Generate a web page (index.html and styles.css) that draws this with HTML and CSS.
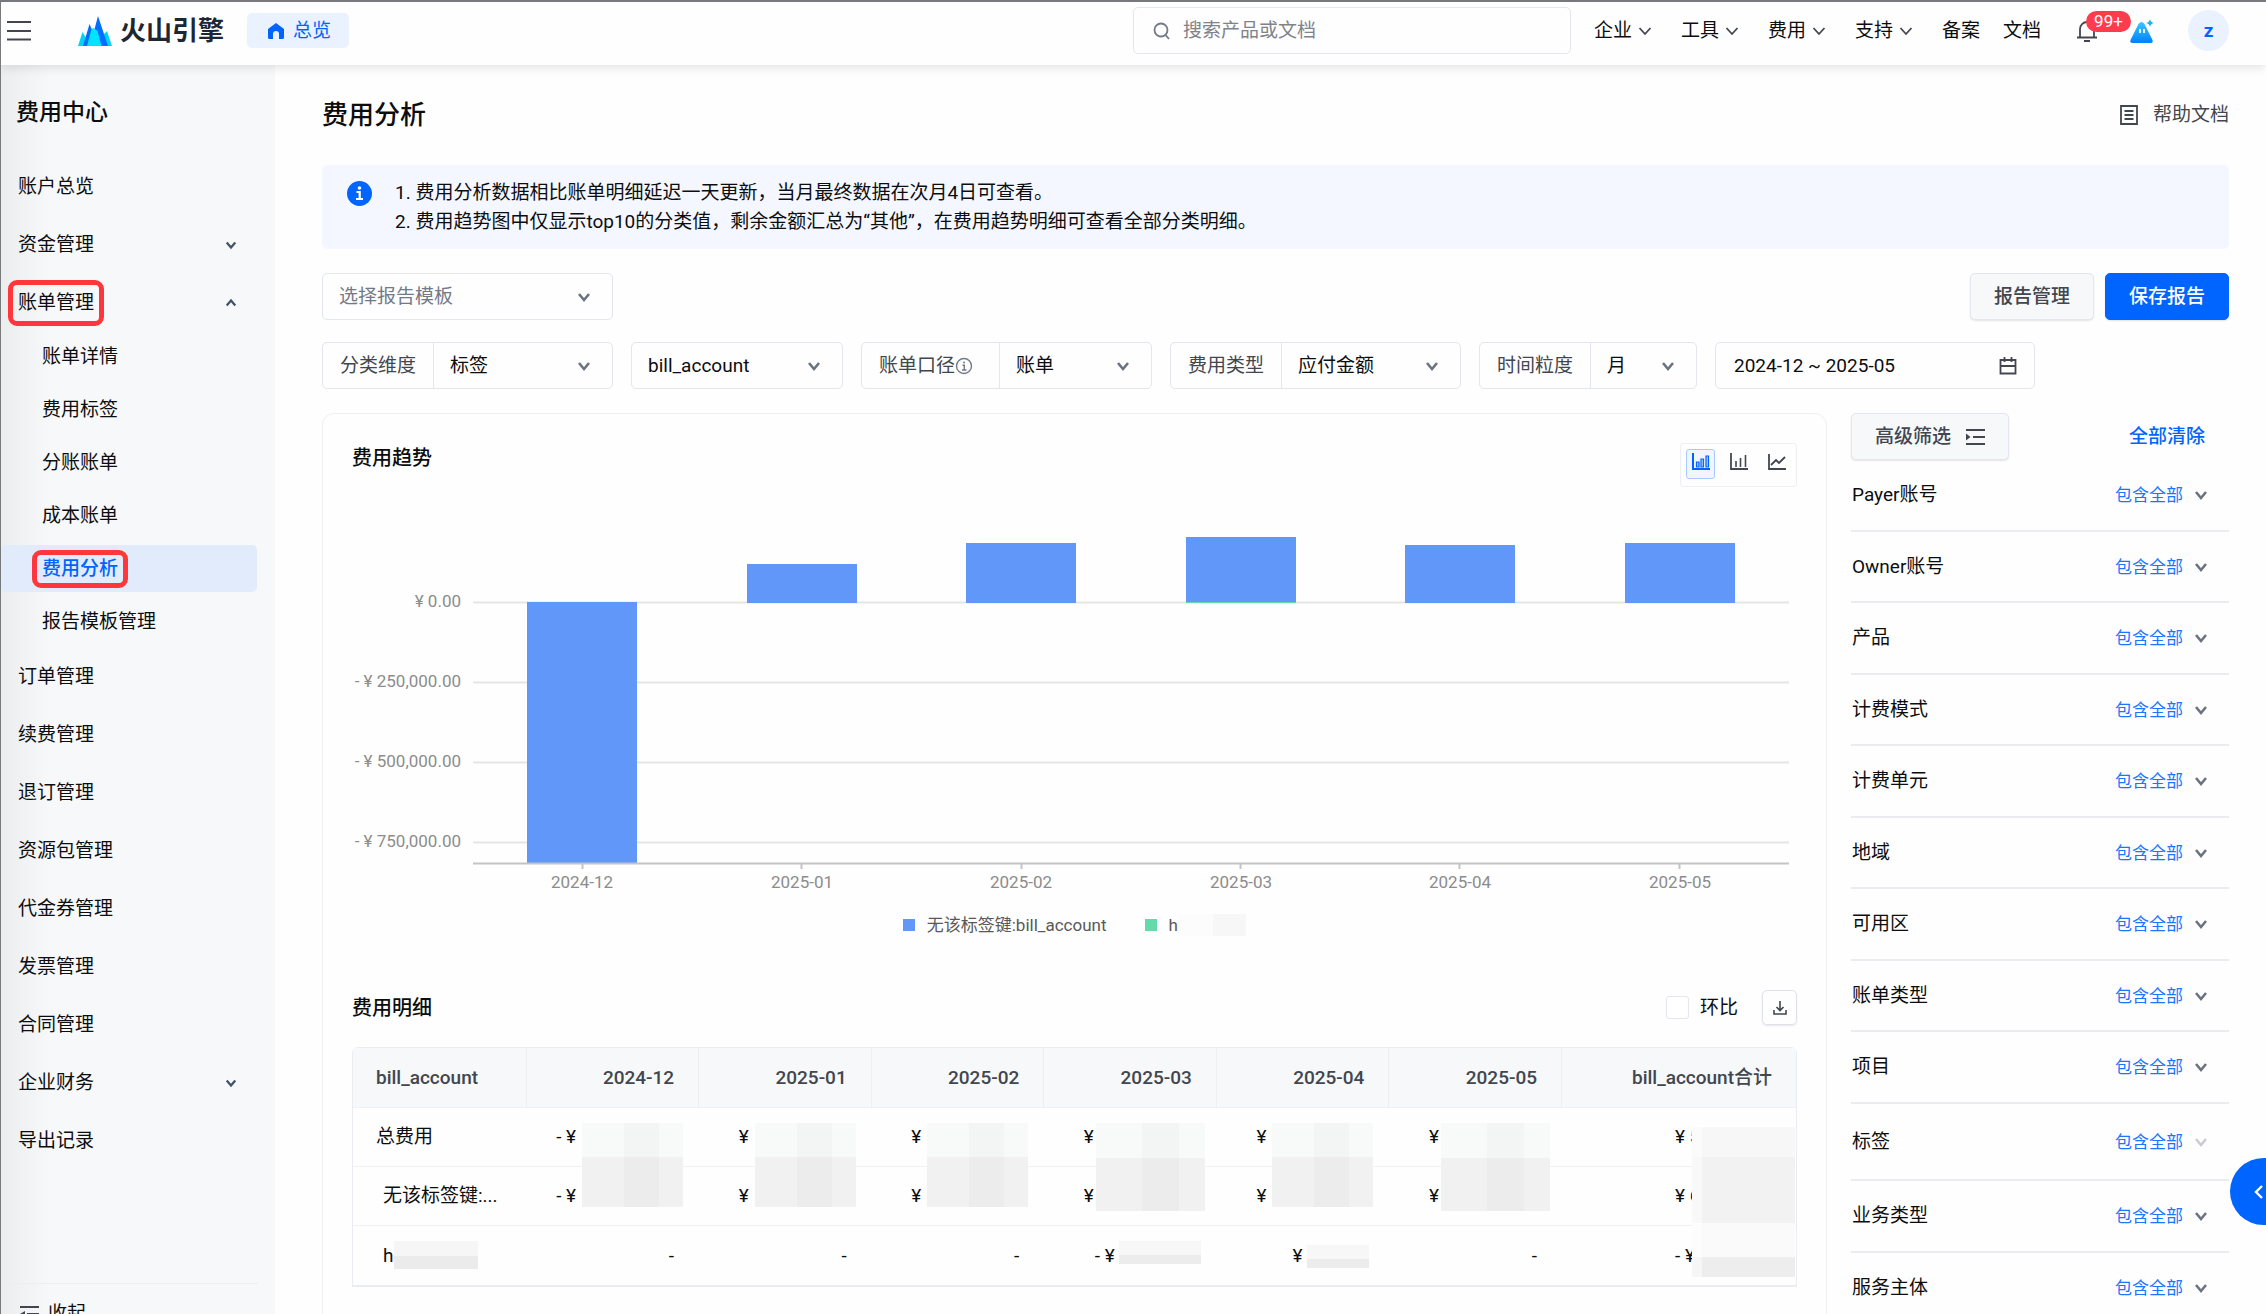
FILE: index.html
```html
<!DOCTYPE html>
<html lang="zh-CN">
<head>
    <meta charset="UTF-8">
    <meta name="viewport" content="width=device-width, initial-scale=1.0">
    <title>费用分析</title>
    <link rel="stylesheet" href="styles.css">
</head>
<body>
    <!-- shared icons -->
    <svg class="sprite" aria-hidden="true">
        <symbol id="down" viewBox="0 0 14 14"><path d="M2 4l5 6 5-6" fill="none" stroke="currentColor" stroke-width="2.6"/></symbol>
        <symbol id="down-thin" viewBox="0 0 14 14"><path d="M1.5 4l5.5 6 5.5-6" fill="none" stroke="currentColor" stroke-width="1.8"/></symbol>
        <symbol id="up" viewBox="0 0 14 14"><path d="M2 10l5-6 5 6" fill="none" stroke="currentColor" stroke-width="2.6"/></symbol>
    </svg>

    <header class="header">
        <button class="menu-button" aria-label="菜单">
            <svg width="24" height="20" viewBox="0 0 24 20"><path d="M0 1h24M0 10h24M0 18.500h24" stroke="#42464e" stroke-width="2"/></svg>
        </button>
        <a class="logo" href="#">
            <svg width="34" height="30" viewBox="0 0 34 30">
                <path d="M0 30L4.500 16 8 22l2-2v10zM24 30V20l5-5 5 15z" fill="#00d4f5"/>
                <path d="M5 30L11.500 8l4 9L20 0l10 30z" fill="#006eff"/>
                <path d="M9 30l4.500-17 2-1 4 3 4 15z" fill="#00e5ff"/>
            </svg>
            <span>火山引擎</span>
        </a>
        <a class="overview" href="#">
            <svg width="16" height="16" viewBox="0 0 16 16"><path d="M8 0L0 6v8.500Q0 16 1.500 16H5v-5a3 3 0 0 1 6 0v5h3.500q1.500 0 1.500-1.500V6z" fill="#0064ff"/></svg>
            <span>总览</span>
        </a>
        <label class="search">
            <svg width="18" height="18" viewBox="0 0 18 18"><circle cx="8" cy="8" r="6.500" fill="none" stroke="#737a87" stroke-width="1.800"/><path d="M12.500 13l3.500 4" stroke="#737a87" stroke-width="1.800"/></svg>
            <input type="text" placeholder="搜索产品或文档" aria-label="搜索产品或文档">
        </label>
        <nav class="top-nav">
            <a href="#">企业<svg class="chevron"><use href="#down-thin"/></svg></a>
            <a href="#">工具<svg class="chevron"><use href="#down-thin"/></svg></a>
            <a href="#">费用<svg class="chevron"><use href="#down-thin"/></svg></a>
            <a href="#">支持<svg class="chevron"><use href="#down-thin"/></svg></a>
            <div class="top-links">
                <a href="#">备案</a>
                <a href="#">文档</a>
            </div>
        </nav>
        <button class="bell" aria-label="消息">
            <svg width="20" height="22" viewBox="0 0 20 22"><path d="M0 17.500h20M3 17V9a7 7 0 0 1 14 0v8M7 21h6" fill="none" stroke="#42464e" stroke-width="1.800"/></svg>
            <span class="badge">99+</span>
        </button>
        <button class="assistant" aria-label="助手">
            <svg width="26" height="26" viewBox="0 0 26 26">
                <defs><linearGradient id="hill" x1="0" y1="0" x2="0" y2="1"><stop offset="0" stop-color="#3cc6ff"/><stop offset="1" stop-color="#0080ff"/></linearGradient></defs>
                <path d="M9.500 6q3-4 6 0l8 16q1 3-2 3h-18q-3 0-2-3z" fill="url(#hill)"/>
                <path d="M11 11v4M15 11v4" stroke="#fff" stroke-width="1.800"/>
                <path d="M21 1q.5 3.500 4 4-3.500.5-4 4-.5-3.500-4-4 3.500-.5 4-4z" fill="#12b8e8"/>
            </svg>
        </button>
        <button class="avatar">z</button>
    </header>

    <div class="layout">
        <aside class="sidebar">
            <h2>费用中心</h2>
            <nav class="menu">
                <a href="#">账户总览</a>
                <a href="#">资金管理<svg class="chevron"><use href="#down"/></svg></a>
                <a href="#"><span class="marked">账单管理</span><svg class="chevron"><use href="#up"/></svg></a>
                <div class="submenu">
                    <a href="#">账单详情</a>
                    <a href="#">费用标签</a>
                    <a href="#">分账账单</a>
                    <a href="#">成本账单</a>
                    <a class="active" href="#"><span class="marked">费用分析</span></a>
                    <a href="#">报告模板管理</a>
                </div>
                <a href="#">订单管理</a>
                <a href="#">续费管理</a>
                <a href="#">退订管理</a>
                <a href="#">资源包管理</a>
                <a href="#">代金券管理</a>
                <a href="#">发票管理</a>
                <a href="#">合同管理</a>
                <a href="#">企业财务<svg class="chevron"><use href="#down"/></svg></a>
                <a href="#">导出记录</a>
            </nav>
            <button class="collapse">
                <svg width="19" height="16" viewBox="0 0 19 16"><path d="M0 1h19M7 8h12M0 15h19" stroke="#42464e" stroke-width="2"/><path d="M5 5v6L0 8z" fill="#42464e"/></svg>
                收起
            </button>
        </aside>

        <main class="main">
            <div class="page-head">
                <h1>费用分析</h1>
                <a class="help" href="#">
                    <svg width="18" height="20" viewBox="0 0 18 20"><path d="M1 1h16v18H1zM4.500 6h9M4.500 10h9M4.500 14h9" fill="none" stroke="#42464e" stroke-width="1.800"/></svg>
                    帮助文档
                </a>
            </div>

            <div class="notice">
                <svg width="25" height="25" viewBox="0 0 25 25"><circle cx="12.500" cy="12.500" r="12.500" fill="#0064ff"/><circle cx="12.500" cy="7" r="1.800" fill="#fff"/><path d="M9.500 11h3.200v7M9 18h7" fill="none" stroke="#fff" stroke-width="2.200"/></svg>
                <ol>
                    <li>费用分析数据相比账单明细延迟一天更新，当月最终数据在次月4日可查看。</li>
                    <li>费用趋势图中仅显示top10的分类值，剩余金额汇总为“其他”，在费用趋势明细可查看全部分类明细。</li>
                </ol>
            </div>

            <div class="template-row">
                <div class="field w-large">
                    <div class="select placeholder">
                        <select aria-label="选择报告模板"><option>选择报告模板</option></select>
                        <svg class="chevron"><use href="#down"/></svg>
                    </div>
                </div>
                <div class="actions">
                    <button class="btn">报告管理</button>
                    <button class="btn primary">保存报告</button>
                </div>
            </div>

            <div class="filters">
                <div class="field w-large">
                    <label for="dimension">分类维度</label>
                    <div class="select">
                        <select id="dimension"><option>标签</option></select>
                        <svg class="chevron"><use href="#down"/></svg>
                    </div>
                </div>
                <div class="field w-small">
                    <div class="select">
                        <select aria-label="标签键"><option>bill_account</option></select>
                        <svg class="chevron"><use href="#down"/></svg>
                    </div>
                </div>
                <div class="field w-large">
                    <label for="scope" class="with-tip">账单口径<svg width="18" height="18" viewBox="0 0 18 18"><circle cx="9" cy="9" r="7.500" fill="none" stroke="#737a87" stroke-width="1.400"/><circle cx="9" cy="5.500" r="1" fill="#737a87"/><path d="M7.500 8.200H9.300V13M7 13h4.500" fill="none" stroke="#737a87" stroke-width="1.400"/></svg></label>
                    <div class="select">
                        <select id="scope"><option>账单</option></select>
                        <svg class="chevron"><use href="#down"/></svg>
                    </div>
                </div>
                <div class="field w-large">
                    <label for="cost-type">费用类型</label>
                    <div class="select">
                        <select id="cost-type"><option>应付金额</option></select>
                        <svg class="chevron"><use href="#down"/></svg>
                    </div>
                </div>
                <div class="field w-period">
                    <label for="period">时间粒度</label>
                    <div class="select">
                        <select id="period"><option>月</option></select>
                        <svg class="chevron"><use href="#down"/></svg>
                    </div>
                </div>
                <div class="field w-date">
                    <input type="text" value="2024-12 ~ 2025-05" aria-label="时间范围">
                    <svg width="18" height="18" viewBox="0 0 18 18"><path d="M1.500 3h15v13.500h-15zM1.500 9h15M5.500 0v5M12.500 0v5" fill="none" stroke="#42464e" stroke-width="1.800"/></svg>
                </div>
            </div>

            <div class="columns">
                <section class="card">
                    <div class="card-head">
                        <h3>费用趋势</h3>
                        <div class="chart-types">
                            <button class="on" aria-label="堆叠柱状图"><svg width="18" height="18" viewBox="0 0 18 18"><path d="M1 0v16h17" fill="none" stroke="currentColor" stroke-width="2"/><path d="M4.500 9h2.500v5H4.500zM9 6h2.500v8H9zM14 3h2.500v11H14z" fill="#a8c8ff" stroke="currentColor" stroke-width="1.200"/></svg></button>
                            <button aria-label="柱状图"><svg width="18" height="18" viewBox="0 0 18 18"><path d="M1 0v16h17" fill="none" stroke="currentColor" stroke-width="1.800"/><path d="M6 8v6M10.500 5v9M15.500 2v12" stroke="currentColor" stroke-width="1.600"/></svg></button>
                            <button aria-label="折线图"><svg width="18" height="18" viewBox="0 0 18 18"><path d="M1 1v15h17" fill="none" stroke="currentColor" stroke-width="1.800"/><path d="M3 12l5-5 3 3 6-6" fill="none" stroke="currentColor" stroke-width="1.800"/></svg></button>
                        </div>
                    </div>

                    <svg class="chart" viewBox="0 0 1445 405">
                        <path class="grid-line" d="M121 101.500h1316M121 181.500h1316M121 261.500h1316M121 341.500h1316"/>
                        <g class="bars">
                            <rect x="175" y="101" width="110" height="261"/>
                            <rect x="395" y="63" width="110" height="39"/>
                            <rect x="614" y="42" width="110" height="60"/>
                            <rect x="834" y="36" width="110" height="65"/>
                            <rect x="1053" y="44" width="110" height="58"/>
                            <rect x="1273" y="42" width="110" height="60"/>
                        </g>
                        <rect class="bar-green" x="834" y="101" width="110" height="1"/>
                        <path class="axis" d="M121 362.500h1316M230.500 362v6M449.500 362v6M669.500 362v6M888.500 362v6M1107.500 362v6M1327.500 362v6"/>
                        <g class="y-labels">
                            <text x="109" y="106">¥ 0.00</text>
                            <text x="109" y="186">- ¥ 250,000.00</text>
                            <text x="109" y="266">- ¥ 500,000.00</text>
                            <text x="109" y="346">- ¥ 750,000.00</text>
                        </g>
                        <g class="x-labels">
                            <text x="230" y="387">2024-12</text>
                            <text x="450" y="387">2025-01</text>
                            <text x="669" y="387">2025-02</text>
                            <text x="889" y="387">2025-03</text>
                            <text x="1108" y="387">2025-04</text>
                            <text x="1328" y="387">2025-05</text>
                        </g>
                    </svg>
                    <div class="legend">
                        <span><i class="dot"></i>无该标签键:bill_account</span>
                        <span><i class="dot green"></i>hu<i class="mask legend-mask"></i></span>
                    </div>

                    <div class="table-head">
                        <h3>费用明细</h3>
                        <label class="check"><input type="checkbox">环比</label>
                        <button class="download" aria-label="下载">
                            <svg width="14" height="14" viewBox="0 0 14 14"><path d="M7 0v9M3.500 6L7 9.500 10.500 6M1 9v4h12V9" fill="none" stroke="#42464e" stroke-width="1.600"/></svg>
                        </button>
                    </div>
                    <div class="table-wrap">
                        <table>
                            <thead>
                                <tr>
                                    <th>bill_account</th>
                                    <th>2024-12</th>
                                    <th>2025-01</th>
                                    <th>2025-02</th>
                                    <th>2025-03</th>
                                    <th>2025-04</th>
                                    <th>2025-05</th>
                                    <th class="total">bill_account合计</th>
                                </tr>
                            </thead>
                            <tbody>
                                <tr>
                                    <td>总费用</td>
                                    <td><span class="amount minus">- ¥</span><i class="mask tall"></i></td>
                                    <td><span class="amount">¥</span><i class="mask tall"></i></td>
                                    <td><span class="amount">¥ 1</span><i class="mask tall"></i></td>
                                    <td><span class="amount">¥</span><i class="mask tall wide"></i></td>
                                    <td><span class="amount">¥</span><i class="mask tall"></i></td>
                                    <td><span class="amount">¥</span><i class="mask tall wide"></i></td>
                                    <td><span class="amount sum">¥ 5</span><i class="mask full"></i></td>
                                </tr>
                                <tr>
                                    <td class="child">无该标签键:...</td>
                                    <td><span class="amount minus">- ¥</span></td>
                                    <td><span class="amount">¥</span></td>
                                    <td><span class="amount">¥ 1</span></td>
                                    <td><span class="amount">¥</span></td>
                                    <td><span class="amount">¥</span></td>
                                    <td><span class="amount">¥</span></td>
                                    <td><span class="amount sum">¥ 6</span></td>
                                </tr>
                                <tr>
                                    <td class="child">h<i class="mask name-mask"></i></td>
                                    <td>-</td>
                                    <td>-</td>
                                    <td>-</td>
                                    <td><span class="amount sum">- ¥</span><i class="mask small"></i></td>
                                    <td><span class="amount short">¥</span><i class="mask small narrow"></i></td>
                                    <td>-</td>
                                    <td><span class="amount sum">- ¥</span></td>
                                </tr>
                            </tbody>
                        </table>
                    </div>
                </section>

                <aside class="panel">
                    <div class="panel-head">
                        <button class="btn advanced">高级筛选
                            <svg width="20" height="18" viewBox="0 0 20 18"><path d="M1 2h19M8 9h12M1 16h19" stroke="#42464e" stroke-width="2"/><path d="M1 5.500v7L5.500 9z" fill="#42464e"/></svg>
                        </button>
                        <a href="#">全部清除</a>
                    </div>
                    <ul>
                        <li>Payer账号<button>包含全部<svg class="chevron"><use href="#down"/></svg></button></li>
                        <li>Owner账号<button>包含全部<svg class="chevron"><use href="#down"/></svg></button></li>
                        <li>产品<button>包含全部<svg class="chevron"><use href="#down"/></svg></button></li>
                        <li>计费模式<button>包含全部<svg class="chevron"><use href="#down"/></svg></button></li>
                        <li>计费单元<button>包含全部<svg class="chevron"><use href="#down"/></svg></button></li>
                        <li>地域<button>包含全部<svg class="chevron"><use href="#down"/></svg></button></li>
                        <li>可用区<button>包含全部<svg class="chevron"><use href="#down"/></svg></button></li>
                        <li>账单类型<button>包含全部<svg class="chevron"><use href="#down"/></svg></button></li>
                        <li>项目<button>包含全部<svg class="chevron"><use href="#down"/></svg></button></li>
                        <li class="tag-row">标签<button>包含全部<svg class="chevron"><use href="#down"/></svg></button></li>
                        <li>业务类型<button>包含全部<svg class="chevron"><use href="#down"/></svg></button></li>
                        <li>服务主体<button>包含全部<svg class="chevron"><use href="#down"/></svg></button></li>
                    </ul>
                </aside>
            </div>
        </main>
    </div>

    <button class="drawer-button" aria-label="展开">
        <svg width="10" height="16" viewBox="0 0 10 16"><path d="M8 2L2 8l6 6" fill="none" stroke="#fff" stroke-width="2.400"/></svg>
    </button>
</body>
</html>
```

FILE: styles.css
```css
* {
    box-sizing: border-box;
}
body {
    margin: 0;
    height: 100vh;
    overflow: hidden;
    display: flex;
    flex-direction: column;
    border-top: 2px solid #77797c;
    border-left: 1px solid #77797c;
    background: #fefefe;
    color: #0c0d0e;
    font-family: Roboto, "Noto Sans CJK SC", sans-serif;
    font-size: 19px;
    line-height: 28px;
}
h1, h2, h3, ul, ol {
    margin: 0;
    padding: 0;
    font-weight: 500;
}
a {
    color: inherit;
    text-decoration: none;
}
button, input, select {
    margin: 0;
    padding: 0;
    border: 0;
    background: none;
    color: inherit;
    font: inherit;
}
i {
    font-style: normal;
}
svg {
    flex-shrink: 0;
}
.sprite {
    position: absolute;
    width: 0;
    height: 0;
}
.chevron {
    width: 14px;
    height: 14px;
    color: #6b7380;
}

/* header */
.header {
    position: relative;
    z-index: 2;
    display: flex;
    align-items: center;
    height: 63px;
    padding: 0 37px 6px 6px;
    background: #fefefe;
    box-shadow: 0 2px 10px rgba(0, 0, 0, 0.12);
    flex-shrink: 0;
}
.menu-button, .bell, .assistant {
    display: flex;
}
.logo {
    display: flex;
    align-items: center;
    gap: 8px;
    margin-left: 47px;
    font-size: 26px;
    font-weight: 700;
    color: #1d2633;
}
.overview {
    display: flex;
    align-items: center;
    gap: 9px;
    height: 35px;
    margin-left: 23px;
    padding: 0 18px 0 21px;
    border-radius: 5px;
    background: #eaf1ff;
    color: #0064ff;
}
.search {
    display: flex;
    align-items: center;
    gap: 12px;
    width: 438px;
    height: 47px;
    margin: 0 23px 0 auto;
    padding-left: 19px;
    border: 1px solid #e3e6ee;
    border-radius: 5px;
}
.search input {
    flex: 1;
    outline: none;
}
.search input::placeholder {
    color: #80838a;
    opacity: 1;
}
.top-nav {
    display: flex;
    gap: 29px;
}
.top-nav a {
    display: flex;
    align-items: center;
    gap: 6px;
}
.top-nav .chevron {
    color: #42464e;
}
.top-links {
    display: flex;
    gap: 23px;
}
.bell {
    position: relative;
    margin-left: 36px;
}
.badge {
    position: absolute;
    left: 9px;
    top: -9px;
    width: 45px;
    height: 21px;
    border-radius: 11px;
    background: #ff3b4e;
    color: #fff;
    font-size: 17px;
    line-height: 21px;
    text-align: center;
}
.assistant {
    margin: 0 33px 0 32px;
}
.avatar {
    width: 41px;
    height: 41px;
    border-radius: 50%;
    background: #eaf1ff;
    color: #0064ff;
    font-weight: 700;
}

/* sidebar */
.layout {
    display: flex;
    flex: 1;
    min-height: 0;
}
.sidebar {
    display: flex;
    flex-direction: column;
    width: 274px;
    padding-top: 34px;
    background: linear-gradient(90deg, #eceded, #f7f8fa 50px);
    flex-shrink: 0;
}
.sidebar h2 {
    padding-left: 15px;
    font-size: 23px;
}
.menu {
    display: flex;
    flex-direction: column;
    gap: 11px;
    margin-top: 36px;
}
.menu a {
    display: flex;
    align-items: center;
    justify-content: space-between;
    height: 47px;
    margin-right: 18px;
    padding: 0 20px 0 17px;
    border-radius: 5px;
}
.menu .chevron {
    width: 12px;
    height: 12px;
    color: #42546a;
}
.submenu {
    display: flex;
    flex-direction: column;
    gap: 6px;
    margin: -4px 0 -3px;
}
.submenu a {
    padding-left: 41px;
}
.submenu .active {
    background: #e2ebfb;
    color: #0064ff;
    font-weight: 500;
}
.marked {
    position: relative;
}
.marked::after {
    content: "";
    position: absolute;
    inset: -9px -10px;
    border: 5px solid #ff373c;
    border-radius: 9px;
}
.submenu .marked::after {
    inset: -5px -10px;
}
.collapse {
    display: flex;
    align-items: center;
    gap: 9px;
    height: 31px;
    margin: auto 17px 0 0;
    padding: 30px 0 0 19px;
    border-top: 1px solid #eceef2;
}

/* page */
.main {
    flex: 1;
    min-width: 0;
    padding: 30px 37px 0 47px;
}
.page-head {
    display: flex;
    align-items: center;
    justify-content: space-between;
    height: 40px;
}
h1 {
    font-size: 26px;
}
.help {
    display: flex;
    align-items: center;
    gap: 15px;
    color: #42464e;
}
.notice {
    display: flex;
    gap: 23px;
    margin-top: 30px;
    padding: 13px 25px;
    border-radius: 5px;
    background: #f4f7ff;
}
.notice svg {
    margin-top: 3px;
}
.notice ol {
    line-height: 29px;
    list-style-position: inside;
}
.notice li {
    font-weight: 400;
}
.template-row {
    display: flex;
    justify-content: space-between;
    margin: 24px 0 22px;
}
.filters {
    display: flex;
    gap: 18px;
}
.field {
    display: flex;
    align-items: center;
    height: 47px;
    border: 1px solid #e3e6ee;
    border-radius: 5px;
}
.w-large {
    width: 291px;
}
.w-small {
    width: 212px;
}
.w-period {
    width: 218px;
}
.w-date {
    width: 320px;
    padding: 0 17px 0 18px;
}
.w-date input {
    flex: 1;
    min-width: 0;
}
.field label {
    display: flex;
    align-items: center;
    align-self: stretch;
    padding: 0 17px;
    border-right: 1px solid #e3e6ee;
    color: #42464e;
}
.field .with-tip {
    padding-right: 26px;
}
.select {
    display: grid;
    align-items: center;
    flex: 1;
}
.select select, .select .chevron {
    grid-area: 1 / 1;
}
.select select {
    appearance: none;
    width: 100%;
    height: 45px;
    padding: 0 16px;
}
.select .chevron {
    justify-self: end;
    margin-right: 21px;
    pointer-events: none;
}
.placeholder {
    color: #737a87;
}
.actions {
    display: flex;
    gap: 11px;
}
.btn {
    height: 47px;
    padding: 0 23px;
    border: 1px solid #e3e6ee;
    border-radius: 5px;
    background: #f6f8fa;
    box-shadow: 0 1px 2px rgba(0, 0, 0, 0.1);
    color: #42464e;
    font-weight: 500;
}
.primary {
    border-color: #0064ff;
    background: #0064ff;
    color: #fff;
}
.columns {
    display: grid;
    grid-template-columns: 1fr 378px;
    gap: 24px;
    margin-top: 24px;
}

/* trend card */
.card {
    min-width: 0;
    padding: 29px 29px 60px;
    border: 1px solid #eeeff3;
    border-radius: 12px;
}
.card-head {
    display: flex;
    align-items: flex-start;
    justify-content: space-between;
}
h3 {
    font-size: 20px;
    line-height: 30px;
}
.chart-types {
    display: flex;
    gap: 9px;
    padding: 5px 5px 7px;
    border: 1px solid #eeeff3;
    border-radius: 3px;
}
.chart-types button {
    display: flex;
    align-items: center;
    justify-content: center;
    width: 29px;
    height: 30px;
    padding-bottom: 4px;
    border: 1px solid transparent;
    border-radius: 3px;
    color: #42464e;
}
.chart-types .on {
    border-color: #a9caff;
    background: #f0f5ff;
    color: #0064ff;
}
.chart {
    display: block;
    width: 100%;
    margin-top: 14px;
    font-size: 17px;
}
.grid-line {
    stroke: #e5e5e5;
    stroke-width: 2;
}
.axis {
    fill: none;
    stroke: #c4c4c4;
    stroke-width: 2;
}
.bars {
    fill: #6297fa;
}
.bar-green {
    fill: #62daab;
}
.y-labels {
    fill: #8c8c8c;
    text-anchor: end;
}
.x-labels {
    fill: #8c8c8c;
    text-anchor: middle;
}
.legend {
    display: flex;
    justify-content: center;
    gap: 38px;
    margin-top: 7px;
    color: #595959;
    font-size: 17px;
    line-height: 24px;
}
.legend span {
    display: flex;
    align-items: center;
}
.dot {
    width: 12px;
    height: 12px;
    margin-right: 12px;
    background: #6297fa;
}
.green {
    background: #62daab;
}
.mask {
    background: #f6f7f7;
}
.legend-mask {
    width: 67px;
    height: 22px;
    margin-left: -8px;
    background: linear-gradient(90deg, #fcfcfc 50%, #f7f7f8 50%);
}

/* detail table */
.table-head {
    display: flex;
    align-items: center;
    gap: 24px;
    margin: 53px 0 22px;
}
.table-head h3 {
    margin-right: auto;
}
.check {
    display: flex;
    align-items: center;
    gap: 11px;
}
.check input {
    appearance: none;
    width: 23px;
    height: 23px;
    border: 1px solid #e3e6ee;
    border-radius: 3px;
    background: #fff;
}
.download {
    display: flex;
    align-items: center;
    justify-content: center;
    width: 35px;
    height: 35px;
    border: 1px solid #dfe2ea;
    border-radius: 5px;
    box-shadow: 0 1px 2px rgba(0, 0, 0, 0.1);
}
.table-wrap {
    border: 1px solid #eaecf1;
    border-bottom-width: 2px;
    border-radius: 6px 6px 0 0;
}
table {
    width: 100%;
    border-spacing: 0;
    table-layout: fixed;
}
th, td {
    position: relative;
    height: 59px;
    padding: 0 24px;
    border-bottom: 1px solid #f0f1f5;
    text-align: right;
}
th {
    height: 60px;
    background: #f6f8fa;
    color: #42464e;
    font-weight: 500;
}
th + th {
    border-left: 1px solid #eceef2;
}
.total {
    width: 235px;
}
th:first-child, td:first-child {
    padding-left: 23px;
    text-align: left;
}
tbody tr:last-child td {
    border-bottom: 0;
}
tbody .child:first-child {
    padding-left: 30px;
}
.amount {
    display: inline-block;
    width: 108px;
    text-align: left;
}
.minus {
    width: 118px;
}
.sum {
    width: 97px;
}
.short {
    width: 72px;
}
td .mask {
    position: absolute;
    z-index: 1;
}
.tall {
    right: 15px;
    top: 15px;
    width: 101px;
    height: 84px;
    background: linear-gradient(90deg, transparent 42%, rgba(0, 0, 0, 0.02) 42% 76%, transparent 76%), linear-gradient(#f8f9f9 40%, #f1f1f2 40%);
}
.tall.wide {
    right: 11px;
    width: 109px;
    height: 88px;
}
.full {
    right: 1px;
    top: 19px;
    width: 103px;
    height: 150px;
    background: linear-gradient(90deg, rgba(255, 255, 255, 0.5) 10%, transparent 10%), linear-gradient(#f7f7f7 20%, #f2f2f2 20% 64%, #fafafa 64% 87%, #ededed 87%);
}
.small {
    right: 15px;
    top: 15px;
    width: 82px;
    height: 23px;
    background: linear-gradient(#f7f7f7 60%, #ececec 60%);
}
.narrow {
    right: 19px;
    top: 19px;
    width: 62px;
}
.name-mask {
    left: 41px;
    top: 15px;
    width: 84px;
    height: 28px;
    background: linear-gradient(#f6f6f7 52%, #ebebeb 52%);
}

/* filter panel */
.panel-head {
    display: flex;
    align-items: center;
    justify-content: space-between;
    padding-right: 24px;
    color: #0064ff;
    font-weight: 500;
}
.advanced {
    display: flex;
    align-items: center;
    gap: 14px;
}
.panel ul {
    list-style: none;
}
.panel li {
    display: flex;
    align-items: center;
    justify-content: space-between;
    height: 71px;
    padding: 0 21px 0 1px;
    border-bottom: 2px solid #eaecf1;
    font-weight: 400;
}
.panel li:nth-child(odd) {
    height: 72px;
}
.panel li button {
    display: flex;
    align-items: center;
    gap: 11px;
    color: #1a75ff;
    font-size: 17px;
}
.panel .tag-row {
    height: 77px;
}
.tag-row .chevron {
    color: #c7ccd6;
}
.drawer-button {
    position: fixed;
    right: 0;
    bottom: 89px;
    z-index: 3;
    display: flex;
    align-items: center;
    justify-content: flex-end;
    width: 36px;
    height: 67px;
    padding-right: 2px;
    border-radius: 34px 0 0 34px;
    background: #0064ff;
}
```
